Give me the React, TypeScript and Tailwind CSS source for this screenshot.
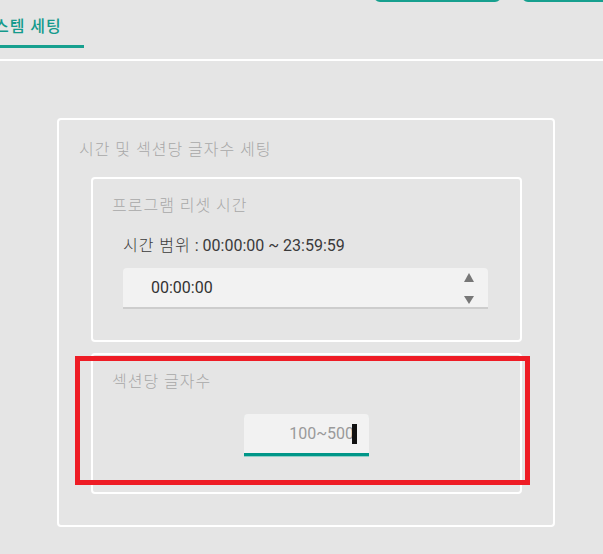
import React from "react";

const font = { fontFamily: 'Roboto, "Noto Sans CJK KR", sans-serif' };

export default function App() {
  return (
    <div
      className="relative w-[603px] h-[554px] overflow-hidden bg-[#e5e5e5]"
      style={font}
    >
      {/* header */}
      <div className="flex items-start h-[61px] border-b-[2px] border-white overflow-hidden">
        <div className="ml-[-44px] w-[128px] shrink-0 pt-[15px] pb-[6px] border-b-[3px] border-[#17a08f] text-center text-[16px] leading-[24px] font-medium tracking-[1px] text-[#149a8c] whitespace-nowrap">
          시스템 세팅
        </div>
        <div className="ml-[290px] mt-[-30px] flex gap-[21px] shrink-0">
          <div className="w-[127px] h-[32px] rounded-[6px] border-[3px] border-[#17a08f]" />
          <div className="w-[127px] h-[32px] rounded-[6px] border-[3px] border-[#17a08f]" />
        </div>
      </div>

      {/* outer box */}
      <div className="ml-[57px] mt-[57px] w-[498px] h-[409px] rounded-[4px] border-[2px] border-white pt-[18px]">
        <div className="pl-[20px] text-[16px] leading-[24px] font-light tracking-[1px] text-[#a8a8a8]">
          시간 및 섹션당 글자수 세팅
        </div>

        {/* box 1 */}
        <div className="ml-[32px] mt-[15px] w-[431px] h-[165px] rounded-[4px] border-[2px] border-white pt-[15px] pl-[19px]">
          <div className="text-[16px] leading-[24px] font-light tracking-[1px] text-[#a8a8a8]">
            프로그램 리셋 시간
          </div>
          <div className="ml-[11px] mt-[16px] text-[16px] leading-[24px] text-[#3a3a3a]">
            <span className="font-light tracking-[1px]">시간 범위</span> : 00:00:00 ~ 23:59:59
          </div>
          <div className="ml-[11px] mt-[10px] w-[365px] h-[41px] flex items-center justify-between rounded-t-[4px] bg-[#f2f2f2] border-b-[2px] border-[#cdcdcd] pl-[28px] pr-[14px]">
            <span className="text-[16px] leading-[24px] text-[#333333]">00:00:00</span>
            <div className="flex flex-col gap-[14px] items-center pt-[1px]">
              <svg width="10" height="9" viewBox="0 0 10 9">
                <path d="M5 0 L10 9 L0 9 Z" fill="#777777" />
              </svg>
              <svg width="10" height="8" viewBox="0 0 10 8">
                <path d="M0 0 L10 0 L5 8 Z" fill="#777777" />
              </svg>
            </div>
          </div>
        </div>

        {/* box 2 */}
        <div className="ml-[32px] mt-[11px] w-[431px] h-[141px] rounded-[4px] border-[2px] border-white pt-[15px]">
          <div className="pl-[19px] text-[16px] leading-[24px] font-light tracking-[1px] text-[#a8a8a8]">
            섹션당 글자수
          </div>
          <div className="mt-[20px] flex justify-center">
            <div className="w-[125px] h-[42px] flex items-center justify-end rounded-t-[4px] bg-[#f2f2f2] border-b-[3px] border-[#009688] shadow-[0_1px_0_#8fd0c8] pr-[12px]">
              <span className="text-[16px] leading-[24px] text-[#9a9a9a]">100~500</span>
              <span className="ml-[-2px] w-[5px] h-[20px] bg-[#111111]" />
            </div>
          </div>
        </div>
      </div>

      {/* red annotation */}
      <div className="absolute left-[75px] top-[356px] w-[455px] h-[129px] border-[5px] border-[#ee1c25]" />
    </div>
  );
}
